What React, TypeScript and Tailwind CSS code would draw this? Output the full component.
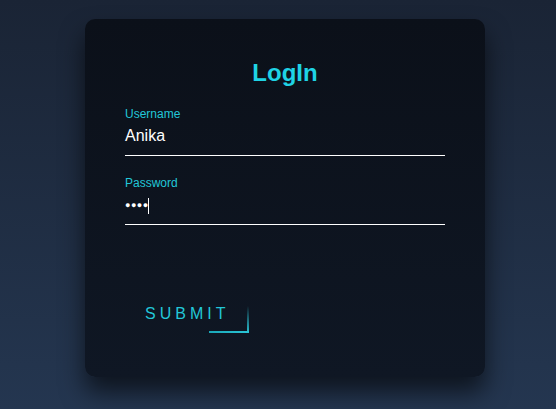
export default function App() {
  return (
    <div
      className="min-h-screen w-full bg-gradient-to-b from-[#1a2435] to-[#243650] pl-[85px] pt-[19px]"
      style={{ fontFamily: '"Liberation Sans", Arial, sans-serif' }}
    >
      <div className="flex h-[358px] w-[400px] flex-col rounded-[10px] bg-gradient-to-b from-[#0b1019] to-[#0f1724] px-10 pt-10 shadow-[0_15px_25px_rgba(0,0,0,0.6)]">
        <h2 className="mb-[20px] text-center text-[24px] font-bold leading-[28px] text-[#1fd3e5]">LogIn</h2>

        <div className="flex flex-col">
          <label className="text-[12px] leading-[14px] text-[#22c7d8]">Username</label>
          <div className="border-b border-white pb-[10px] pt-[6px] text-[16px] leading-[18px] text-white">Anika</div>
        </div>

        <div className="mt-[20px] flex flex-col">
          <label className="text-[12px] leading-[14px] text-[#22c7d8]">Password</label>
          <div className="flex h-[35px] items-center border-b border-white pb-[4px] pt-[1px]">
            <span className="text-[9px] leading-none tracking-[0.5px] text-white">●●●●</span>
            <span className="ml-[-1px] h-[16px] w-px bg-white" />
          </div>
        </div>

        <div className="mt-[70px]">
          <button className="relative px-5 py-[10px] text-[16px] uppercase leading-[18px] tracking-[4px] text-[#22c7d8]">
            SUBMIT
            <span className="absolute bottom-0 right-0 h-[2px] w-[40px] bg-gradient-to-r from-[#1aa7b8] to-[#2ac5d6]" />
            <span className="absolute bottom-0 right-0 h-[27px] w-[2px] bg-gradient-to-b from-transparent to-[#2ac5d6]" />
          </button>
        </div>
      </div>
    </div>
  );
}
